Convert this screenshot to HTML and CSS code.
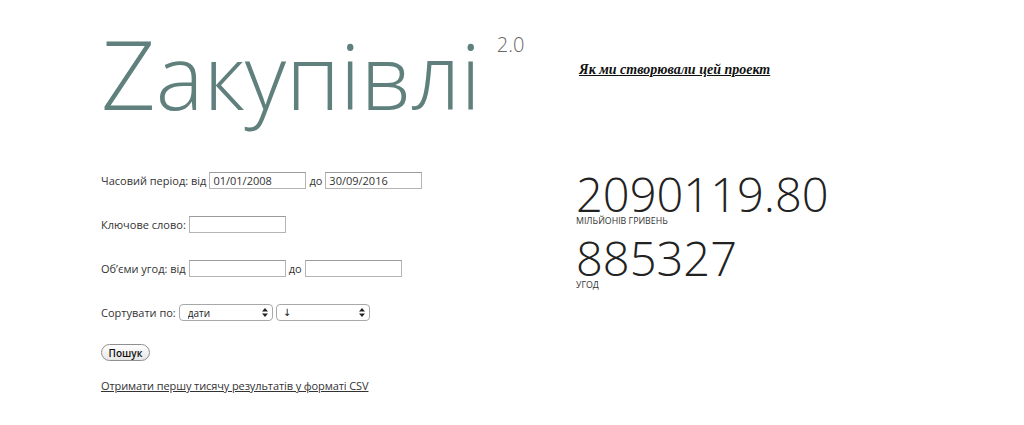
FILE: index.html
```html
<!DOCTYPE html>
<html lang="uk">
<head>
<meta charset="utf-8">
<title>Zакупівлі 2.0</title>
<link rel="stylesheet" href="styles.css">
</head>
<body>
<div class="page">
  <header class="top">
    <div class="brand">
      <h1 class="title"><span class="cap">Z</span>акупівлі</h1>
      <span class="version">2.0</span>
    </div>
    <a class="about" href="#">Як ми створювали цей проект</a>
  </header>
  <main class="main">
    <form class="filters">
      <div class="row">
        <label>Часовий період: від</label>
        <input class="field" type="text" value="01/01/2008">
        <span class="sep">до</span>
        <input class="field" type="text" value="30/09/2016">
      </div>
      <div class="row">
        <label>Ключове слово:</label>
        <input class="field" type="text">
      </div>
      <div class="row">
        <label>Об’єми угод: від</label>
        <input class="field" type="text">
        <span class="sep">до</span>
        <input class="field" type="text">
      </div>
      <div class="row">
        <label>Сортувати по:</label>
        <span class="select-wrap">
          <select class="select"><option>дати</option></select>
          <svg class="arrows" width="6" height="9" viewBox="0 0 6 9"><path d="M3 0L6 3.5H0Z M3 9L0 5.5H6Z" fill="#222"/></svg>
        </span>
        <span class="select-wrap">
          <select class="select select-dir"><option>↓</option></select>
          <svg class="arrows" width="6" height="9" viewBox="0 0 6 9"><path d="M3 0L6 3.5H0Z M3 9L0 5.5H6Z" fill="#222"/></svg>
        </span>
      </div>
      <div class="row-btn">
        <button class="search" type="button">Пошук</button>
      </div>
      <a class="csv" href="#">Отримати першу тисячу результатів у форматі CSV</a>
    </form>
    <section class="stats">
      <div class="num">2090119.80</div>
      <div class="unit">мільйонів гривень</div>
      <div class="num num2">885327</div>
      <div class="unit">угод</div>
    </section>
  </main>
</div>
</body>
</html>
```
FILE: styles.css
```css
html, body {
  margin: 0;
  padding: 0;
  background: #fff;
}
body {
  font-family: "Open Sans", "Liberation Sans", sans-serif;
  color: #333;
}
.page {
  padding-left: 101px;
  padding-top: 26px;
  width: 923px;
}
.top {
  display: grid;
  grid-template-columns: 478px auto;
  align-items: start;
}
.brand {
  display: flex;
  align-items: flex-start;
}
.title {
  margin: 0;
  font-family: "Open Sans", sans-serif;
  font-size: 90px;
  line-height: 95px;
  font-weight: 300;
  color: #5f807c;
  letter-spacing: 0;
}
.cap {
  font-size: 95px;
  line-height: 95px;
}
.version {
  margin-left: 16px;
  margin-top: 9px;
  font-family: "Open Sans", sans-serif;
  font-size: 20px;
  line-height: 20px;
  font-weight: 300;
  color: #666;
}
.about {
  margin-top: 36px;
  font-family: "Liberation Serif", "Times New Roman", serif;
  font-style: italic;
  font-weight: bold;
  font-size: 14px;
  line-height: 16px;
  color: #111;
  text-decoration: underline;
}
.main {
  display: grid;
  grid-template-columns: 475px auto;
  margin-top: 49px;
}
.filters {
  margin: 0;
  display: flex;
  flex-direction: column;
  font-size: 11px;
  color: #333;
}
.row {
  display: flex;
  align-items: center;
  height: 17px;
  margin-bottom: 27px;
  white-space: nowrap;
}
.row label {
  margin-right: 3px;
}
.field {
  box-sizing: border-box;
  width: 97px;
  height: 17px;
  margin: 0;
  padding: 0 3px;
  border: 1px solid #b5b5b5;
  border-top-color: #9a9a9a;
  font-family: "Open Sans", "Liberation Sans", sans-serif;
  font-size: 11px;
  color: #333;
  background: #fff;
}
.sep {
  margin: 0 3px;
}
.select-wrap {
  position: relative;
  display: inline-block;
  margin-right: 3px;
}
.select {
  appearance: none;
  -webkit-appearance: none;
  box-sizing: border-box;
  width: 94px;
  height: 17px;
  margin: 0;
  padding: 0 0 0 8px;
  border: 1px solid #a8a8a8;
  border-radius: 4px;
  background: #fff;
  font-family: "Open Sans", "DejaVu Sans", sans-serif;
  font-size: 10px;
  color: #222;
  display: block;
}
.select-dir {
  font-family: "DejaVu Sans", sans-serif;
  padding-left: 6px;
  color: #111;
}
.arrows {
  position: absolute;
  right: 5px;
  top: 4px;
}
.row-btn {
  height: 17px;
  margin-top: -4px;
  margin-bottom: 17px;
}
.search {
  box-sizing: border-box;
  width: 49px;
  height: 17px;
  padding: 0;
  border: 1px solid #8f8f8f;
  border-radius: 9px;
  background: linear-gradient(#ffffff, #e6e6e6);
  font-family: "Open Sans", "Liberation Sans", sans-serif;
  font-size: 10px;
  font-weight: 600;
  color: #111;
}
.csv {
  align-self: flex-start;
  font-size: 11px;
  line-height: 15px;
  letter-spacing: -0.1px;
  color: #333;
  text-decoration: underline;
}
.stats {
  color: #222;
}
.num {
  font-size: 47px;
  line-height: 44px;
  font-weight: 300;
  letter-spacing: 0;
}
.num2 {
  margin-top: 10px;
}
.unit {
  font-size: 8.8px;
  line-height: 10px;
  text-transform: uppercase;
  color: #333;
}
```
